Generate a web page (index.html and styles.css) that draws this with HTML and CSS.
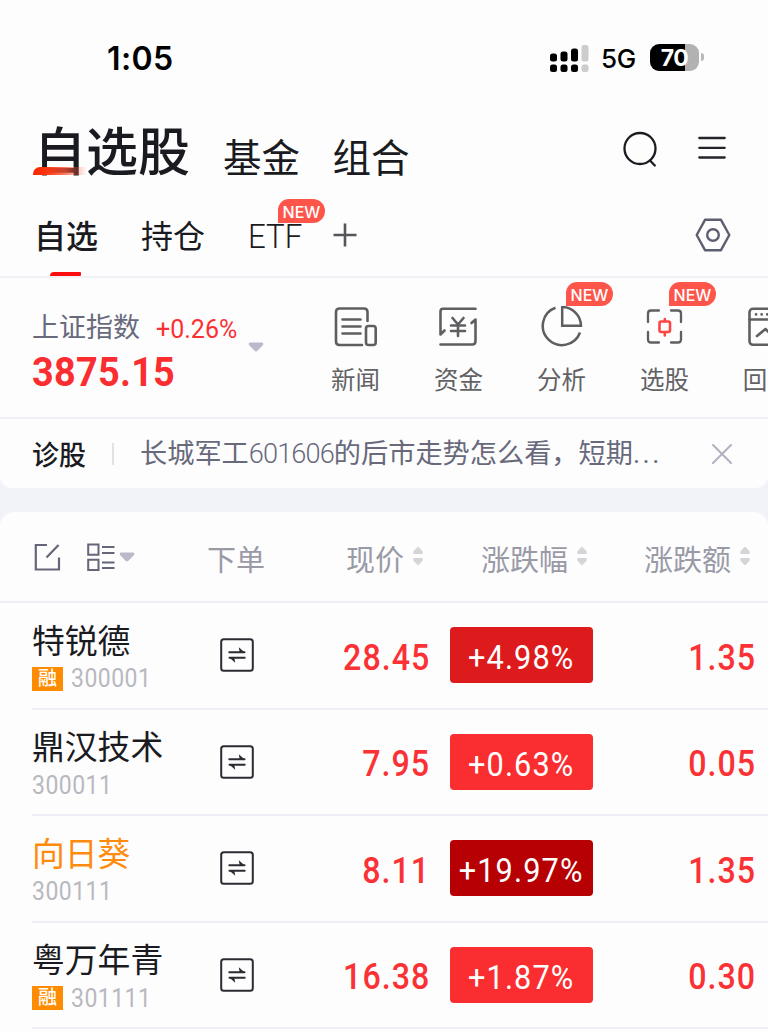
FILE: index.html
```html
<!DOCTYPE html>
<html lang="zh-CN">
<head>
<meta charset="utf-8">
<title>自选股</title>
<link rel="stylesheet" href="styles.css">
</head>
<body>
<svg class="defs" width="0" height="0">
  <defs>
    <symbol id="swap" viewBox="0 0 34 34">
      <rect x="1.2" y="1.2" width="31.6" height="31.6" rx="2.6" fill="none" stroke="#2b2c32" stroke-width="2"/>
      <path d="M9.300 14.200H24.500M9.500 19.800H24.700" fill="none" stroke="#2b2c32" stroke-width="2" stroke-linecap="round"/>
      <path d="M18.800 9.200 25.300 15H19.800ZM15.200 24.800 8.700 19H14.200Z" fill="#2b2c32"/>
    </symbol>
    <symbol id="sort" viewBox="0 0 12 20">
      <path d="M6 0.4 10.3 5Q11.8 8 9.3 8H2.7Q.2 8 1.7 5ZM6 19.6 10.3 15Q11.8 12 9.3 12H2.7Q.2 12 1.7 15Z" fill="#d4d4d9"/>
    </symbol>
    <symbol id="caret" viewBox="0 0 16 10">
      <path d="M2 .5H14Q16 1 15 3L9.5 8.8Q8 10 6.500 8.800L1 3Q0 1 2 .5Z" fill="#bbb9ca"/>
    </symbol>
  </defs>
</svg>
<header class="status">
  <span class="clock">1:05</span>
  <svg class="signal" width="40" height="28" viewBox="0 0 40 28">
    <g fill="#000"><rect x="0" y="8.500" width="7" height="8" rx="2.5"/><rect x="10.500" y="6.500" width="7" height="10" rx="2.500"/><rect x="21" y="3.500" width="7" height="13" rx="2.500"/><rect x="0" y="19.500" width="7" height="7.500" rx="2.500"/><rect x="10.500" y="19.500" width="7" height="7.500" rx="2.500"/><rect x="21" y="19.500" width="7" height="7.500" rx="2.500"/></g>
    <g fill="#ccc"><rect x="31.500" y="0" width="7" height="16.500" rx="2.500"/><rect x="31.500" y="19.500" width="7" height="7.500" rx="2.500"/></g>
  </svg>
  <span class="net">5G</span>
  <span class="battery"><span>70</span></span><i class="battery-tip"></i>
</header>

<nav class="main-nav">
  <div class="main-tab active">自选股</div>
  <div class="main-tab">基金</div>
  <div class="main-tab">组合</div>
  <svg class="search" width="36" height="38" viewBox="0 0 36 38" fill="none" stroke="#1b1c21" stroke-width="2.300" stroke-linecap="round"><circle cx="17" cy="17.500" r="15.500"/><path d="M27 29.500 31.800 34.500"/></svg>
  <svg class="menu" width="28" height="24" viewBox="0 0 28 24" stroke="#24252b" stroke-width="2.300" stroke-linecap="round"><path d="M1.300 2H26.700M1.300 11.800H26.700M1.300 21.500H26.700"/></svg>
</nav>

<nav class="sub-nav">
  <div class="sub-tab active">自选</div>
  <div class="sub-tab">持仓</div>
  <div class="sub-tab etf"><span>ETF</span><b class="new">NEW</b></div>
  <svg class="plus" width="24" height="24" viewBox="0 0 24 24" stroke="#55555a" stroke-width="2.600"><path d="M.5 12H23.500M12 .5V23.500"/></svg>
  <svg class="hex" width="36" height="34" viewBox="0 0 36 34" fill="none" stroke="#5d5f70" stroke-width="2.400" stroke-linejoin="round"><path d="M10 1.800H26L34.300 17 26 32.200H10L1.700 17Z"/><circle cx="18" cy="17" r="5.800"/></svg>
</nav>

<section class="market">
  <div class="index">
    <div class="index-top"><span class="index-name">上证指数</span><span class="index-pct">+0.26%</span></div>
    <div class="index-value"><span>3875.15</span></div>
  </div>
  <svg class="index-caret" width="16" height="10"><use href="#caret"/></svg>
  <div class="tools">
    <div class="tool">
      <svg width="44" height="40" viewBox="0 0 44 40" fill="none" stroke="#5f5f62" stroke-width="2.600" stroke-linecap="round"><path d="M33.500 14V5Q33.500 1.500 30 1.500H5.500Q2 1.500 2 5V34.500Q2 38 5.500 38H28"/><path d="M8.500 12.500H26.500M8.500 19.500H26.500M8.500 26.500H26.500"/><rect x="32" y="19" width="9.700" height="19" rx="2.500"/></svg>
      <span>新闻</span>
    </div>
    <div class="tool">
      <svg width="44" height="40" viewBox="0 0 44 40" fill="none" stroke="#5f5f62" stroke-width="2.600" stroke-linecap="round" stroke-linejoin="round"><path d="M38.500 1.800H6Q3.500 1.800 3.500 4.500V27.500L7.500 23.500M3.500 37.500H35.500Q38.500 37.500 38.500 34V12.500L34.500 16M15.500 11 21 17.500 26.500 11M14 18.500H28M14 24H28M21 18V29"/></svg>
      <span>资金</span>
    </div>
    <div class="tool">
      <svg width="44" height="42" viewBox="0 0 44 42" fill="none" stroke="#5f5f62" stroke-width="2.500"><path d="M15.500 1.800A19.200 19.200 0 1 0 40 26.500"/><path d="M22.200 1A19 19 0 0 1 41 19.800H22.200Z"/></svg>
      <span>分析</span><b class="new">NEW</b>
    </div>
    <div class="tool">
      <svg width="44" height="40" viewBox="0 0 44 40" fill="none" stroke="#5f5f62" stroke-width="2.300" stroke-linecap="round"><path d="M16 3.500H8Q5 3.500 5 6.500V15M28 3.500H35Q38 3.500 38 6.500V15M5 25V32.500Q5 35.500 8 35.500H16M28 35.500H35Q38 35.500 38 32.500V25"/><g stroke="#fb4547" stroke-width="2.600"><rect x="16.500" y="14.500" width="10.500" height="10.500" rx="1.500"/><path d="M21.800 12V14M21.800 26V28.500"/></g></svg>
      <span>选股</span><b class="new">NEW</b>
    </div>
    <div class="tool partial">
      <svg width="44" height="40" viewBox="0 0 44 40" fill="none" stroke="#5f5f62" stroke-width="2.600" stroke-linecap="round" stroke-linejoin="round"><rect x="3.500" y="1.800" width="38" height="36" rx="3.500"/><path d="M3.500 12.500H41"/><path d="M11 29 19.500 22 25 27.500 33 20"/><path d="M10 7.400H36" stroke-dasharray=".1 5.500"/></svg>
      <span>回</span>
    </div>
  </div>
</section>

<section class="diagnosis">
  <span class="diag-label">诊股</span><i class="diag-line"></i>
  <span class="diag-text">长城军工<span class="diag-code">601606</span>的后市走势怎么看，短期<span class="dots">...</span></span>
  <svg class="close" width="20" height="20" viewBox="0 0 20 20" stroke="#b3b1bf" stroke-width="2" stroke-linecap="round"><path d="M1 1 19 19M19 1 1 19"/></svg>
</section>

<main class="list">
  <div class="row head">
    <div class="view-tools">
      <svg width="27" height="28" viewBox="0 0 27 28" fill="none" stroke="#656679" stroke-width="2.200"><path d="M13 2H1.800V26.500H25V14.500M12.500 14.500 24.500 2"/></svg>
      <svg class="layout" width="28" height="28" viewBox="0 0 28 28" fill="none" stroke="#656679" stroke-width="2"><path d="M1.200 1.500H11.500V11.800H1.200ZM1.200 16.800H11.500V27H1.200ZM15 4H27.500M15 10H27.500M15 19.500H27.500M15 25H27.500"/></svg>
      <svg width="16" height="10"><use href="#caret"/></svg>
    </div>
    <div class="order">下单</div>
    <div class="price">现价<svg width="12" height="20"><use href="#sort"/></svg></div>
    <div class="pct">涨跌幅<svg width="12" height="20"><use href="#sort"/></svg></div>
    <div class="diff">涨跌额<svg width="12" height="20"><use href="#sort"/></svg></div>
  </div>
  <div class="row">
    <div class="stock"><div class="name">特锐德</div><div class="meta"><em>融</em><span>300001</span></div></div>
    <svg class="order" width="34" height="34"><use href="#swap"/></svg>
    <div class="price"><span>28.45</span></div>
    <div class="pct up2"><span>+4.98%</span></div>
    <div class="diff"><span>1.35</span></div>
  </div>
  <div class="row">
    <div class="stock"><div class="name">鼎汉技术</div><div class="meta"><span>300011</span></div></div>
    <svg class="order" width="34" height="34"><use href="#swap"/></svg>
    <div class="price"><span>7.95</span></div>
    <div class="pct"><span>+0.63%</span></div>
    <div class="diff"><span>0.05</span></div>
  </div>
  <div class="row">
    <div class="stock"><div class="name marked">向日葵</div><div class="meta"><span>300111</span></div></div>
    <svg class="order" width="34" height="34"><use href="#swap"/></svg>
    <div class="price"><span>8.11</span></div>
    <div class="pct up3"><span>+19.97%</span></div>
    <div class="diff"><span>1.35</span></div>
  </div>
  <div class="row">
    <div class="stock"><div class="name">粤万年青</div><div class="meta"><em>融</em><span>301111</span></div></div>
    <svg class="order" width="34" height="34"><use href="#swap"/></svg>
    <div class="price"><span>16.38</span></div>
    <div class="pct"><span>+1.87%</span></div>
    <div class="diff"><span>0.30</span></div>
  </div>
</main>
</body>
</html>
```
FILE: styles.css
```css
* { box-sizing: border-box; }
body { margin: 0; width: 768px; height: 1032px; overflow: hidden; background: #f2f3f8; color: #1a1b21; font-family: Roboto, "Noto Sans CJK SC", sans-serif; }
svg { display: block; flex: none; }
.defs { position: absolute; }
i, em { font-style: normal; }

.status { display: flex; align-items: center; height: 114px; padding-left: 107px; background: #fdfdfe; font-family: Inter, sans-serif; color: #000; }
.clock { width: 443px; padding-top: 3px; font-size: 32px; font-weight: 600; line-height: 40px; letter-spacing: .4px; }
.signal { margin: 3px 11px 0 0; }
.net { width: 49px; padding-top: 2px; font-size: 26px; font-weight: 500; letter-spacing: -.2px; }
.battery { width: 49px; height: 27px; border-radius: 9px; background: linear-gradient(90deg, #000 72%, #b2b2b2 72%); color: #fff; font-size: 23px; font-weight: 700; line-height: 28px; text-align: center; letter-spacing: -.5px; }
.battery-tip { width: 3px; height: 8px; margin-left: 2px; border-radius: 0 4px 4px 0; background: #b8b8b8; }

.main-nav { display: flex; height: 77px; padding-left: 34px; background: #fdfdfe; }
.main-tab { margin: 17px 0 0 33px; width: 76.500px; font-size: 38.500px; line-height: 56px; white-space: nowrap; }
.main-tab.active { position: relative; width: 156px; margin: 4px 0 0; font-size: 52px; font-weight: 500; line-height: 72px; }
.main-tab.active::after { content: ""; position: absolute; left: -1px; bottom: 16px; width: 54px; height: 8px; border-radius: 7px 0 0 0; background: linear-gradient(90deg, #fb2500 0, #fb3510 25%, rgba(252,82,50,.75) 60%, rgba(255,120,100,0) 100%); }
.search { margin: 17px 0 0 214px; }
.menu { margin: 22px 0 0 39px; }

.sub-nav { display: flex; height: 87px; padding: 22px 0 0 34px; border-bottom: 2px solid #f0f1f7; background: #fdfdfe; font-size: 32px; line-height: 48px; }
.sub-tab { width: 64px; margin-right: 43px; white-space: nowrap; }
.sub-tab.active { position: relative; font-weight: 500; }
.sub-tab.active::after { content: ""; position: absolute; left: 16px; bottom: 0; width: 31px; height: 4px; border-radius: 4px 1px 1px 0; background: #fb0d0d; }
.etf { position: relative; width: 56px; margin-right: 29px; font-size: 34px; line-height: 46px; }
.etf span { display: inline-block; transform: scaleX(.92); transform-origin: left; font-weight: 350; }
.plus { margin-top: 10px; }
.hex { margin: 5px 0 0 338px; }
.new { position: absolute; width: 47px; height: 24px; border-radius: 11px 12px 12px 0; background: #fe554b; color: #fff; font: 500 16px/26px Inter, sans-serif; text-align: center; }
.etf .new { left: 30px; top: -14px; }

.market { display: flex; height: 141px; border-bottom: 2px solid #f0f1f7; background: #fdfdfe; }
.index { width: 249px; padding: 28px 0 0 32px; }
.index-top { display: flex; height: 40px; line-height: 44px; }
.index-name { width: 124px; color: #686a7c; font-size: 27px; }
.index-pct { padding-top: 2px; color: #fa3033; font-size: 25px; white-space: nowrap; }
.index-value { color: #fa2e30; font-size: 40px; font-weight: 700; line-height: 54px; letter-spacing: .3px; }
.index-value span { display: inline-block; transform: scaleX(.945); transform-origin: left; }
.index-caret { flex: none; margin: 64px 0 0 -1px; }
.tools { display: flex; flex: none; width: 464px; margin-left: 40px; overflow: hidden; }
.tool { position: relative; flex: none; width: 103px; height: 130px; padding-top: 28px; color: #626265; font-size: 24.500px; text-align: center; white-space: nowrap; }
.tool svg { height: 42px; margin: 0 auto; }
.tool > span { display: block; margin-top: 15px; line-height: 36px; }
.partial > span { padding-right: 25px; }
.tool .new { left: 56px; top: 4px; }

.diagnosis { display: flex; align-items: center; height: 69px; padding: 0 0 0 32px; background: #fdfdfe; border-radius: 0 0 12px 12px; }
.diag-label { width: 80px; font-size: 27px; font-weight: 500; }
.diag-line { width: 2px; height: 22px; margin-right: 26px; background: #e1e1e8; }
.diag-text { width: 572px; color: #686a7c; font-size: 27.200px; line-height: 40px; white-space: nowrap; }
.diag-code { letter-spacing: -.9px; font-weight: 350; }
.dots { letter-spacing: 2.500px; }

.list { height: 530px; margin-top: 24px; border-radius: 14px 14px 0 0; background: #fdfdfe; }
.row { display: grid; grid-template-columns: 188px 109px 100px 164px 163px; align-items: center; height: 106.500px; margin-left: 32px; width: 736px; position: relative; border-bottom: 2px solid #eeeff6; }
.row.head { width: 768px; height: 91px; margin: 0; padding-left: 32px; color: #999aa5; font-size: 29px; }
.view-tools { display: flex; align-items: center; padding-left: 2px; }
.layout { margin: 0 4px 0 26px; }
.head .order { margin-left: -13px; padding-top: 3px; }
.head .price, .head .pct, .head .diff { display: flex; justify-content: flex-end; align-items: center; gap: 8px; padding-top: 2px; }
.head .price svg, .head .pct svg, .head .diff svg { margin-top: -3px; }
.head .price, .head .pct, .head .diff { margin-right: 5px; }
.stock { padding-top: 3px; }
.name { font-size: 32.800px; line-height: 44px; white-space: nowrap; }
.marked { color: #ff8b0d; }
.meta { display: flex; align-items: center; height: 30px; color: #b8b8bf; font-size: 25px; line-height: 32px; }
.meta em { width: 31px; height: 24px; margin-right: 8px; background: #ff8b00; color: #fff; font-size: 19px; font-weight: 500; line-height: 24px; text-align: center; }
.meta span { display: inline-block; padding-top: 1px; letter-spacing: .5px; transform: scaleX(.92); transform-origin: left; }
.row:not(.head) .price, .row:not(.head) .diff { display: flex; justify-content: flex-end; padding-top: 4px; color: #fa3235; font-size: 37px; font-weight: 500; }
.price span, .diff span { letter-spacing: 1.200px; transform: scaleX(.87); transform-origin: right; }
.price span { margin-right: -1px; }
.pct span { letter-spacing: 1.200px; transform: scaleX(.93); font-weight: 450; }
.row:not(.head) .pct { display: grid; place-items: center; width: 143px; height: 56px; margin-left: 21px; padding-top: 5px; border-radius: 4px; background: #fa2e31; color: #fff; font-size: 33px; }
.row:not(.head) .up2 { background: #dd1b1d; }
.row:not(.head) .up3 { background: #b70003; }
```
